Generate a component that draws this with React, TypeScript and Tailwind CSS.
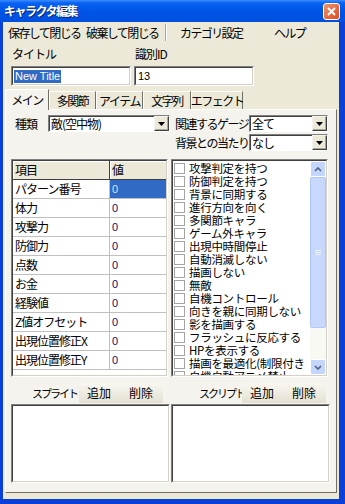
const ROWS: ReadonlyArray<[string, string]> = [
  ["パターン番号", "0"],
  ["体力", "0"],
  ["攻撃力", "0"],
  ["防御力", "0"],
  ["点数", "0"],
  ["お金", "0"],
  ["経験値", "0"],
  ["Z値オフセット", "0"],
  ["出現位置修正X", "0"],
  ["出現位置修正Y", "0"],
];

const FLAGS: ReadonlyArray<string> = [
  "攻撃判定を持つ",
  "防御判定を持つ",
  "背景に同期する",
  "進行方向を向く",
  "多関節キャラ",
  "ゲーム外キャラ",
  "出現中時間停止",
  "自動消滅しない",
  "描画しない",
  "無敵",
  "自機コントロール",
  "向きを親に同期しない",
  "影を描画する",
  "フラッシュに反応する",
  "HPを表示する",
  "描画を最適化(制限付き",
  "自機自動アニメ禁止",
];

const TABS: ReadonlyArray<[string, string]> = [
  ["メイン", "w-[44px]"],
  ["多関節", "w-[47px]"],
  ["アイテム", "w-[47px]"],
  ["文字列", "w-[48px]"],
  ["エフェクト", "w-[52px]"],
];

function DownArrow() {
  return (
    <svg width="7" height="4" viewBox="0 0 7 4" aria-hidden>
      <path d="M0 0h7L3.5 4z" fill="#000" />
    </svg>
  );
}

function Dropdown({ value, className }: { value: string; className: string }) {
  return (
    <div
      className={`flex h-[17px] border border-t-[#808080] border-l-[#808080] border-b-white border-r-white bg-white shadow-[inset_1px_1px_0_#404040] ${className}`}
    >
      <span className="flex-1 pl-[2px] pt-px leading-[14px] tracking-[-1px]">{value}</span>
      <div className="flex w-[15px] items-center justify-center border border-t-[#f4f3ee] border-l-[#f4f3ee] border-b-[#404040] border-r-[#404040] bg-[#ece9d8] shadow-[inset_-1px_-1px_0_#aca899]">
        <DownArrow />
      </div>
    </div>
  );
}

function Sunken({ className, children }: { className: string; children?: React.ReactNode }) {
  return (
    <div
      className={`border border-t-[#808080] border-l-[#808080] border-b-white border-r-white ${className}`}
    >
      <div className="h-full w-full overflow-hidden border border-t-[#404040] border-l-[#404040] border-b-[#d4d0c8] border-r-[#d4d0c8] bg-white">
        {children}
      </div>
    </div>
  );
}

function ToolButtons() {
  return (
    <div className="flex h-[20px] bg-[linear-gradient(180deg,#f8f7f1,#e4e1d2)]">
      <span className="flex w-[40px] items-center justify-center">追加</span>
      <span className="flex w-[44px] items-center justify-center">削除</span>
    </div>
  );
}

function ScrollBar() {
  return (
    <div className="flex w-[16px] shrink-0 flex-col bg-[#f9f9f4]">
      <div className="flex h-[16px] items-center justify-center rounded-[2px] border border-white bg-[#c4d6fb]">
        <svg width="8" height="5" viewBox="0 0 8 5" aria-hidden>
          <path d="M1 4l3-3 3 3" stroke="#4d6185" strokeWidth="1.6" fill="none" />
        </svg>
      </div>
      <div className="flex h-[151px] items-center justify-center rounded-[2px] border border-[#b1c7f5] bg-[#c8d7fc]">
        <div className="flex flex-col gap-px">
          <span className="h-px w-[6px] bg-[#eef3fe]" />
          <span className="h-px w-[6px] bg-[#eef3fe]" />
          <span className="h-px w-[6px] bg-[#eef3fe]" />
        </div>
      </div>
      <div className="flex-1" />
      <div className="flex h-[16px] items-center justify-center rounded-[2px] border border-white bg-[#c4d6fb]">
        <svg width="8" height="5" viewBox="0 0 8 5" aria-hidden>
          <path d="M1 1l3 3 3-3" stroke="#4d6185" strokeWidth="1.6" fill="none" />
        </svg>
      </div>
    </div>
  );
}

export default function App() {
  return (
    <div className="flex h-[504px] w-[345px] flex-col overflow-hidden whitespace-nowrap bg-[#0b3fd9] font-['Noto_Sans_CJK_JP',sans-serif] text-[12px] leading-[14px] text-black">
      {/* title bar */}
      <div className="flex h-[22px] shrink-0 items-center justify-between bg-[linear-gradient(180deg,#3a8cff_0%,#0862f0_14%,#0056e8_45%,#0050dc_100%)] pl-[4px] pr-[5px]">
        <span className="font-bold tracking-[-1.5px] text-white [text-shadow:1px_1px_0_#0a1e7a]">
          キャラクタ編集
        </span>
        <div className="flex h-[17px] w-[17px] items-center justify-center rounded-[3px] border border-white bg-[linear-gradient(135deg,#f0946e,#dd4a1c)]">
          <svg width="9" height="9" viewBox="0 0 9 9" aria-hidden>
            <path d="M1 1l7 7M8 1L1 8" stroke="#fff" strokeWidth="2" />
          </svg>
        </div>
      </div>

      <div className="mb-[5px] ml-[3px] mr-[6px] flex flex-1 flex-col bg-[#ece9d8]">
        {/* menu */}
        <div className="flex h-[21px] shrink-0 items-center tracking-[-1.6px]">
          <span className="ml-[5px] w-[78px]">保存して閉じる</span>
          <span className="w-[79px]">破棄して閉じる</span>
          <span className="h-[17px] w-px bg-[#aca899] shadow-[1px_0_0_#fff]" />
          <span className="ml-[14px] w-[94px]">カテゴリ設定</span>
          <span>ヘルプ</span>
        </div>

        {/* title / id */}
        <div className="mt-[4px] flex tracking-[-1px]">
          <span className="ml-[9px] w-[123px]">タイトル</span>
          <span>識別ID</span>
        </div>
        <div className="mt-[5px] flex gap-[3px] pl-[8px]">
          <Sunken className="h-[20px] w-[120px]">
            <div className="flex h-full items-center pl-[1px]">
              <span className="bg-[#316ac5] px-px font-['Liberation_Sans',sans-serif] text-[11px] leading-[13px] text-white">
                New Title
              </span>
            </div>
          </Sunken>
          <Sunken className="h-[20px] w-[120px]">
            <div className="flex h-full items-center pl-[2px] font-['Liberation_Sans',sans-serif] text-[11px]">
              13
            </div>
          </Sunken>
        </div>

        {/* tabs */}
        <div className="mt-[3px] flex h-[20px] items-end pl-[2px] tracking-[-1.5px]">
          {TABS.map(([t, w], i) =>
            i === 0 ? (
              <div
                key={t}
                className={`relative z-10 -mb-px flex h-[21px] items-center justify-center rounded-tl-[2px] border-l border-t border-r border-white border-r-[#716f64] bg-[#f4f3ee] ${w}`}
              >
                {t}
              </div>
            ) : (
              <div
                key={t}
                className={`flex h-[18px] items-center justify-center rounded-tl-[2px] border-l border-t border-r border-white border-r-[#716f64] bg-[#ece9d8] ${w}`}
              >
                {t}
              </div>
            ),
          )}
        </div>

        {/* panel */}
        <div className="mb-[6px] ml-[2px] mr-[2px] flex flex-1 flex-col border border-l-white border-t-white border-b-[#716f64] border-r-[#716f64] bg-[#f4f3ee]">
          <div className="flex pt-[5px]">
            <div className="flex w-[166px] items-start pl-[9px]">
              <span className="mt-[2px] w-[33px] tracking-[-1px]">種類</span>
              <Dropdown value="敵(空中物)" className="w-[122px]" />
            </div>
            <div className="flex flex-col gap-[2px] pl-[3px] tracking-[-1.5px]">
              <div className="flex items-center">
                <span className="w-[74px]">関連するゲージ</span>
                <Dropdown value="全て" className="w-[79px]" />
              </div>
              <div className="flex items-center">
                <span className="w-[74px]">背景との当たり</span>
                <Dropdown value="なし" className="w-[79px]" />
              </div>
            </div>
          </div>

          <div className="ml-[5px] mt-[8px] flex gap-[3px]">
            <Sunken className="h-[218px] w-[157px]">
              <div className="flex h-[19px] border-b border-b-[#404040] bg-[#ece9d8] tracking-[-1px]">
                <span className="flex w-[97px] items-center border-r border-r-[#404040] pl-[2px] shadow-[inset_1px_1px_0_#fff]">
                  項目
                </span>
                <span className="flex flex-1 items-center pl-[2px] shadow-[inset_1px_1px_0_#fff]">値</span>
              </div>
              {ROWS.map(([k, v], i) => (
                <div key={k} className="flex h-[19px] border-b border-b-[#c0c0c0] tracking-[-1px]">
                  <span className="flex w-[97px] items-center border-r border-r-[#c0c0c0] pl-[2px]">{k}</span>
                  <span
                    className={`flex flex-1 items-center pl-[2px] font-['Liberation_Sans',sans-serif] text-[11px] ${
                      i === 0 ? "bg-[#316ac5] text-[#d8e4ff]" : "text-[#1a0a5a]"
                    }`}
                  >
                    {v}
                  </span>
                </div>
              ))}
            </Sunken>

            <Sunken className="h-[218px] w-[157px]">
              <div className="flex h-full">
                <div className="flex flex-1 flex-col pt-px">
                  {FLAGS.map((f) => (
                    <div key={f} className="flex h-[13px] shrink-0 items-center gap-[4px] pl-[1px]">
                      <span className="h-[11px] w-[11px] shrink-0 border border-[#a4a4a4] bg-white" />
                      <span className="text-[11.5px] leading-[13px] tracking-[-0.3px]">{f}</span>
                    </div>
                  ))}
                </div>
                <ScrollBar />
              </div>
            </Sunken>
          </div>

          <div className="ml-[5px] mt-[6px] flex">
            <div className="flex w-[160px] items-center">
              <span className="ml-[21px] w-[47px] text-[11px] tracking-[-2px]">スプライト</span>
              <ToolButtons />
            </div>
            <div className="flex items-center">
              <span className="ml-[28px] w-[43px] text-[11px] tracking-[-2px]">スクリプト</span>
              <ToolButtons />
            </div>
          </div>

          <div className="ml-[5px] mt-px flex gap-[1px]">
            <Sunken className="h-[79px] w-[159px]" />
            <Sunken className="h-[79px] w-[159px]" />
          </div>
        </div>
      </div>
    </div>
  );
}
